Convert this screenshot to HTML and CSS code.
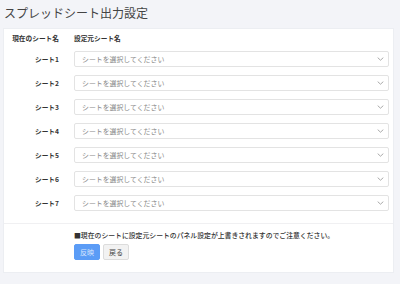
FILE: index.html
```html
<!DOCTYPE html>
<html lang="ja">
<head>
<meta charset="utf-8">
<link rel="stylesheet" href="styles.css">
</head>
<body>
<h1 class="title">スプレッドシート出力設定</h1>
<div class="card">
  <div class="grid">
    <div class="head label">現在のシート名</div>
    <div class="head">設定元シート名</div>

    <div class="label row">シート1</div>
    <div class="row"><div class="select"><span>シートを選択してください</span><svg class="chev" viewBox="0 0 8 5"><path d="M0.5 0.8 L4 4 L7.5 0.8" fill="none" stroke="#888" stroke-width="0.9"/></svg></div></div>

    <div class="label row">シート2</div>
    <div class="row"><div class="select"><span>シートを選択してください</span><svg class="chev" viewBox="0 0 8 5"><path d="M0.5 0.8 L4 4 L7.5 0.8" fill="none" stroke="#888" stroke-width="0.9"/></svg></div></div>

    <div class="label row">シート3</div>
    <div class="row"><div class="select"><span>シートを選択してください</span><svg class="chev" viewBox="0 0 8 5"><path d="M0.5 0.8 L4 4 L7.5 0.8" fill="none" stroke="#888" stroke-width="0.9"/></svg></div></div>

    <div class="label row">シート4</div>
    <div class="row"><div class="select"><span>シートを選択してください</span><svg class="chev" viewBox="0 0 8 5"><path d="M0.5 0.8 L4 4 L7.5 0.8" fill="none" stroke="#888" stroke-width="0.9"/></svg></div></div>

    <div class="label row">シート5</div>
    <div class="row"><div class="select"><span>シートを選択してください</span><svg class="chev" viewBox="0 0 8 5"><path d="M0.5 0.8 L4 4 L7.5 0.8" fill="none" stroke="#888" stroke-width="0.9"/></svg></div></div>

    <div class="label row">シート6</div>
    <div class="row"><div class="select"><span>シートを選択してください</span><svg class="chev" viewBox="0 0 8 5"><path d="M0.5 0.8 L4 4 L7.5 0.8" fill="none" stroke="#888" stroke-width="0.9"/></svg></div></div>

    <div class="label row">シート7</div>
    <div class="row"><div class="select"><span>シートを選択してください</span><svg class="chev" viewBox="0 0 8 5"><path d="M0.5 0.8 L4 4 L7.5 0.8" fill="none" stroke="#888" stroke-width="0.9"/></svg></div></div>
  </div>
  <div class="footer">
    <p class="note">■現在のシートに設定元シートのパネル設定が上書きされますのでご注意ください。</p>
    <div class="buttons">
      <button class="btn primary">反映</button>
      <button class="btn">戻る</button>
    </div>
  </div>
</div>
</body>
</html>
```

FILE: styles.css
```css
html, body {
  margin: 0;
  padding: 0;
  background: #f3f4f8;
  font-family: "Noto Sans CJK JP", "Noto Sans", sans-serif;
  color: #333;
}
.title {
  margin: 0;
  padding: 5px 0 0 4px;
  height: 28px;
  box-sizing: border-box;
  font-size: 12px;
  line-height: 16px;
  font-weight: 400;
  color: #444;
}
.card {
  margin: 0 6px 0 3px;
  background: #fff;
  border: 1px solid #eceef2;
  box-sizing: border-box;
}
.grid {
  display: grid;
  grid-template-columns: 55px 1fr;
  column-gap: 15px;
  padding: 0 4px 8px 0;
}
.head {
  height: 18px;
  line-height: 18px;
  font-size: 6.7px;
  font-weight: 700;
  color: #333;
}
.label {
  text-align: right;
}
.row {
  height: 24px;
  display: flex;
  align-items: center;
}
.label.row {
  justify-content: flex-end;
  font-size: 6.7px;
  font-weight: 700;
  color: #333;
}
.select {
  flex: 1;
  height: 16px;
  box-sizing: border-box;
  border: 1px solid #e3e3e3;
  border-radius: 2px;
  display: flex;
  align-items: center;
  justify-content: space-between;
  padding: 0 4px 0 7px;
  font-size: 6.9px;
  color: #888;
}
.chev {
  width: 7px;
  height: 4px;
}
.footer {
  border-top: 1px solid #f0f0f2;
  padding: 5px 0 12px 70px;
}
.note {
  margin: 0;
  font-size: 6.85px;
  line-height: 12px;
  font-weight: 500;
  color: #333;
}
.buttons {
  display: flex;
  gap: 3px;
  margin-top: 3px;
}
.btn {
  width: 26px;
  height: 16px;
  padding: 0;
  border: 1px solid #dcdcdc;
  border-radius: 2px;
  background: #f2f2f2;
  font-family: "Noto Sans CJK JP", sans-serif;
  font-size: 7px;
  color: #444;
}
.btn.primary {
  background: #5b9cf6;
  border-color: #5b9cf6;
  color: #dbe8fd;
}
```
